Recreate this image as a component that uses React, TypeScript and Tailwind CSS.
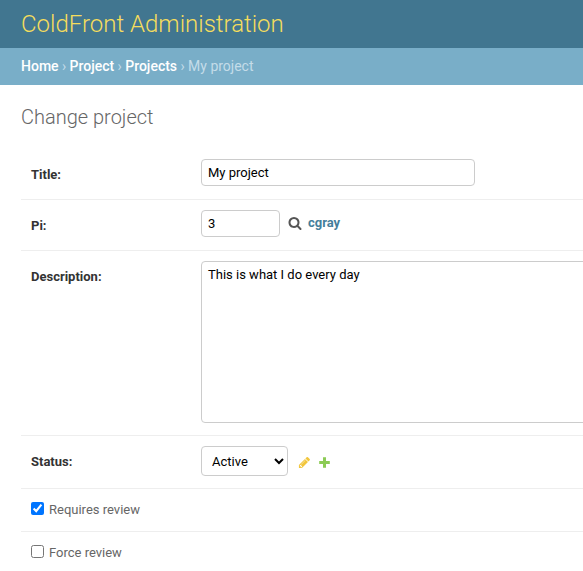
import type { ReactNode } from "react";

function SearchIcon() {
  return (
    <svg width="14" height="14" viewBox="0 0 1792 1792" fill="#555555">
      <path d="M1216 832q0-185-131.5-316.5t-316.5-131.5-316.5 131.5-131.5 316.5 131.5 316.5 316.5 131.5 316.5-131.5 131.5-316.5zm512 832q0 52-38 90t-90 38q-54 0-90-38l-343-342q-179 124-399 124-143 0-273.5-55.5t-225-150-150-225-55.5-273.5 55.5-273.5 150-225 225-150 273.5-55.5 273.5 55.5 225 150 150 225 55.5 273.5q0 220-124 399l343 343q37 37 37 90z" />
    </svg>
  );
}

function PencilIcon() {
  return (
    <svg width="13" height="13" viewBox="0 0 1792 1792" fill="#efb80b">
      <path d="M491 1536l91-91-235-235-91 91v107h128v128h107zm523-928q0-22-22-22-10 0-17 7l-542 542q-7 7-7 17 0 22 22 22 10 0 17-7l542-542q7-7 7-17zm-54-192l416 416-832 832h-416v-416zm683 96q0 53-37 90l-166 166-416-416 166-165q36-38 90-38 53 0 91 38l235 234q37 39 37 91z" />
    </svg>
  );
}

function PlusIcon() {
  return (
    <svg width="11" height="11" viewBox="0 0 11 11" fill="#70bf2b">
      <path d="M4 .2h3V4h3.8v3H7v3.8H4V7H.2V4H4z" />
    </svg>
  );
}

function Field({ label, height, children }: { label: string; height: string; children: ReactNode }) {
  return (
    <div className={`flex border-b border-[#eee] p-2.5 ${height}`}>
      <label className="w-[170px] shrink-0 pt-[7px] text-[13px] leading-[17px] font-bold text-[#333]">{label}</label>
      <div className="flex shrink-0 items-start">{children}</div>
    </div>
  );
}

function Check({ label, checked }: { label: string; checked?: boolean }) {
  return (
    <div className="flex h-[43px] items-start border-b border-[#eee] px-2.5 pt-[13px]">
      <input type="checkbox" defaultChecked={checked} className="h-[13px] w-[13px] shrink-0" />
      <label className="ml-[5px] text-[13px] leading-[16px] text-[#666]">{label}</label>
    </div>
  );
}

export default function App() {
  return (
    <div className="h-[571px] w-[583px] overflow-hidden bg-white font-['Roboto',sans-serif] text-[#333]">
      <header className="flex h-12 items-center bg-[#417690] px-[21px] text-2xl leading-[24px] font-light text-[#f5dd5d]">
        <h1>ColdFront Administration</h1>
      </header>
      <nav className="flex h-[37px] items-center gap-[3.4px] bg-[#79aec8] px-[21px] pb-0.5 text-sm text-[#c4dce8]">
        <a className="font-medium text-white">Home</a>
        <span>›</span>
        <a className="font-medium text-white">Project</a>
        <span>›</span>
        <a className="font-medium text-white">Projects</a>
        <span>›</span>
        <span>My project</span>
      </nav>
      <main className="pl-[21px]">
        <h2 className="h-16 pt-5 text-xl leading-[24px] font-light text-[#666]">Change project</h2>
        <Field label="Title:" height="h-[51px]">
          <input defaultValue="My project" className="h-[27px] w-[274px] rounded border border-[#ccc] px-1.5 text-[13px] text-black" />
        </Field>
        <Field label="Pi:" height="h-[51px]">
          <input defaultValue="3" className="h-[27px] w-[79px] rounded border border-[#ccc] px-1.5 text-[13px] text-black" />
          <span className="mt-1.5 ml-2"><SearchIcon /></span>
          <a className="mt-1 ml-1.5 text-[13px] leading-[17px] font-bold text-[#447e9b]">cgray</a>
        </Field>
        <Field label="Description:" height="h-[185px]">
          <textarea defaultValue="This is what I do every day" className="h-[162px] w-[610px] resize-none rounded border border-[#ccc] px-1.5 py-[5px] text-[13px] leading-[15px] text-black" />
        </Field>
        <Field label="Status:" height="h-[53px]">
          <select className="h-[30px] w-[87px] rounded border border-[#ccc] bg-white px-1.5 text-[13px] text-black">
            <option>Active</option>
          </select>
          <span className="mt-[10px] ml-[10px] opacity-80"><PencilIcon /></span>
          <span className="mt-[11px] ml-2 opacity-80"><PlusIcon /></span>
        </Field>
        <Check label="Requires review" checked />
        <Check label="Force review" />
      </main>
    </div>
  );
}
